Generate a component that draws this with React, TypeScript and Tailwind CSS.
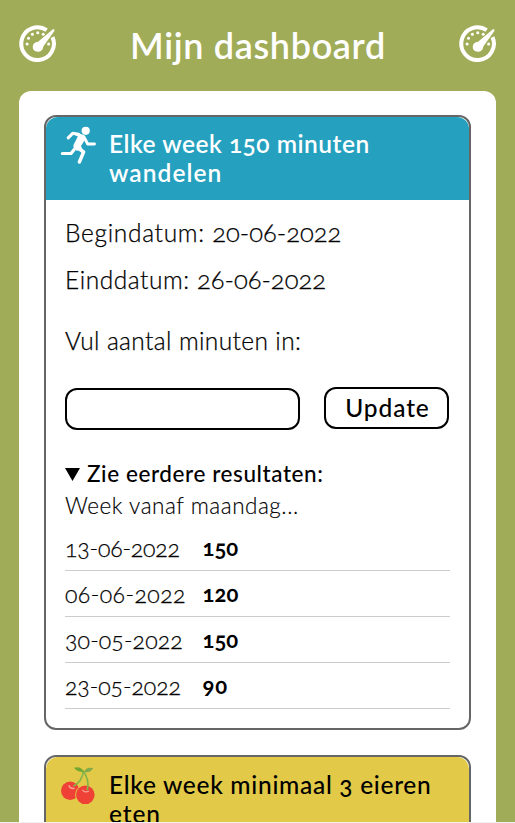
import React from 'react';

const results = [
  { date: '13-06-2022', value: '150', dateSpacing: 'tracking-[-0.15px]', valueSpacing: 'tracking-normal' },
  { date: '06-06-2022', value: '120', dateSpacing: 'tracking-[0.45px]', valueSpacing: 'tracking-[0.1px]' },
  { date: '30-05-2022', value: '150', dateSpacing: 'tracking-[0.15px]', valueSpacing: 'tracking-normal' },
  { date: '23-05-2022', value: '90', dateSpacing: 'tracking-[-0.05px]', valueSpacing: 'tracking-[0.9px]' },
];

function Gauge() {
  return (
    <svg viewBox="0 0 38 38" className="h-[38px] w-[38px] shrink-0" aria-hidden="true">
      <path d="M27.7 6.2A16.3 16.3 0 1 0 33.5 13.1" fill="none" stroke="#fff" strokeWidth="4" />
      <path d="M33.9 5.2Q36.2 4.8 35.4 7L24.3 22.5Q23.9 27.6 18.8 27.8Q13.7 27.3 13.7 22.6Q14.5 18.1 19.1 17.8Z" fill="#fff" />
      <g fill="#fff">
        <circle cx="8.1" cy="20" r="1.5" />
        <circle cx="9.5" cy="14.3" r="1.5" />
        <circle cx="13.4" cy="10.2" r="1.5" />
        <circle cx="18.8" cy="8.8" r="1.5" />
        <circle cx="24.2" cy="10.2" r="1.5" />
        <circle cx="29.6" cy="20" r="1.5" />
      </g>
    </svg>
  );
}

function Runner() {
  return (
    <svg viewBox="0 0 36 38" className="h-[38px] w-9 shrink-0" aria-hidden="true">
      <circle cx="25.7" cy="4.8" r="4.1" fill="#fff" />
      <g fill="none" stroke="#fff" strokeLinecap="round" strokeLinejoin="round">
        <path d="M8.2 11.8L12.7 7.3L18.5 8.2" strokeWidth="3.1" />
        <path d="M25 12.8L27.7 18H34.5" strokeWidth="2.9" />
        <path d="M2.4 27.5H11L14.2 23.5" strokeWidth="3.2" />
        <path d="M17.4 21.5L23.6 26L19.4 36" strokeWidth="3.4" />
      </g>
      <path d="M17.3 6.8L23.8 9.1Q26.6 10.6 25.4 13L21 20.1L22.6 23.4L16.7 24.7Q12.7 22.7 13.5 19L17.8 10.5L14.8 9Z" fill="#fff" />
    </svg>
  );
}

function Cherries() {
  return (
    <svg viewBox="0 0 36 40" className="h-10 w-9 shrink-0" aria-hidden="true">
      <circle cx="10.2" cy="23.7" r="9.2" fill="#ef4136" />
      <circle cx="25.1" cy="27.8" r="10" fill="#e2ca48" />
      <circle cx="25.3" cy="27.8" r="9.3" fill="#ef4136" />
      <path d="M8.8 18.2q1.4 4.2 5.8 3.1M22.4 22.8q2.3 3.4 6.5 1.4" fill="none" stroke="#f9a299" strokeWidth="1.3" />
      <path d="M13.4 19.2Q22.2 14.4 23.3 4.5Q29.8 12.5 27.3 23.3" fill="none" stroke="#84b449" strokeWidth="1.7" />
      <path d="M24 5Q16.5 5 14 .8Q21-1.5 24 5Z" fill="#72a832" />
      <path d="M24 5Q26-.5 33.2 1Q30.5 6.3 24 5Z" fill="#80aa4c" />
    </svg>
  );
}

export default function App() {
  return (
    <div className="h-[823px] overflow-hidden bg-[#f1f1f1] font-['Lato',sans-serif] text-black">
      <div className="h-[822px] overflow-hidden bg-[#a1ac58] px-[19px]">
        <header className="mr-[-1px] flex h-[91px] items-start justify-between pt-6 text-white">
          <Gauge />
          <h1 className="text-4xl leading-[43px] font-semibold tracking-[0.65px] whitespace-nowrap"><span>Mijn dashboard</span></h1>
          <Gauge />
        </header>
        <main className="flex flex-col gap-[25px] rounded-t-xl bg-white px-[25px] pt-6">
          <section className="h-[615px] rounded-xl border-2 border-[#666]">
            <div className="flex h-[83px] gap-[13px] rounded-t-xl bg-[#25a1bf] pl-[14px] text-white">
              <div className="pt-[9px]"><Runner /></div>
              <h2 className="pt-3 text-[24.5px] leading-[29px] font-semibold whitespace-nowrap oldstyle-nums"><span className="tracking-[0.5px]">Elke week 150 minuten</span><br /><span className="tracking-[1.05px]">wandelen</span></h2>
            </div>
            <div className="px-[19px] pt-[18px] text-[24.5px] leading-[29px]">
              <p className="h-[29px] font-light oldstyle-nums [-webkit-text-stroke:0.25px]"><span className="tracking-[0.7px]">Begindatum: </span><span className="text-[25.5px]">20-06-2022</span></p>
              <p className="mt-[18px] h-[29px] font-light oldstyle-nums [-webkit-text-stroke:0.25px]"><span className="tracking-[0.55px]">Einddatum: </span><span className="text-[25.5px]">26-06-2022</span></p>
              <label htmlFor="minutes" className="mt-8 block font-light [-webkit-text-stroke:0.25px]"><span className="tracking-[0.38px]">Vul aantal minuten in:</span></label>
              <div className="mt-8 flex items-start gap-6">
                <input id="minutes" className="mt-px h-[42px] w-[235px] rounded-xl border-2 border-black bg-white px-3 outline-none" />
                <button className="h-[42px] w-[125px] rounded-xl border-2 border-black bg-white pb-0.5 pl-0.5 leading-[29px] font-medium"><span className="tracking-[0.9px]">Update</span></button>
              </div>
              <div className="mt-7 flex h-8 items-center text-[22.5px] leading-8 font-medium">
                <svg viewBox="0 0 15 13" className="mr-[7px] h-[13px] w-[15px]" aria-hidden="true"><path d="M0 0h15L7.5 13Z" /></svg>
                <span className="tracking-[0.58px]">Zie eerdere resultaten:</span>
              </div>
              <p className="text-[22.5px] leading-8 font-light [-webkit-text-stroke:0.15px]"><span className="tracking-[0.52px]">Week vanaf maandag...</span></p>
              <div className="mt-[3px]">
                {results.map(({ date, value, dateSpacing, valueSpacing }) => (
                  <div key={date} className="flex h-[46px] items-center border-b border-[#ccc] pt-px text-[22px] leading-8 oldstyle-nums">
                    <div className={`w-[137.5px] text-[23px] font-light [-webkit-text-stroke:0.25px] ${dateSpacing}`}><span>{date}</span></div>
                    <strong className={`font-bold ${valueSpacing}`}><span>{value}</span></strong>
                  </div>
                ))}
              </div>
            </div>
          </section>
          <section className="h-[200px] rounded-xl border-2 border-[#666]">
            <div className="flex h-[83px] gap-[13px] rounded-t-xl bg-[#e2ca48] pl-[14px]">
              <div className="pt-2.5"><Cherries /></div>
              <h2 className="pt-[13px] text-[24.5px] leading-[29px] font-medium whitespace-nowrap oldstyle-nums"><span className="tracking-[0.7px]">Elke week minimaal 3 eieren</span><br /><span className="tracking-[0.9px]">eten</span></h2>
            </div>
          </section>
        </main>
      </div>
    </div>
  );
}
